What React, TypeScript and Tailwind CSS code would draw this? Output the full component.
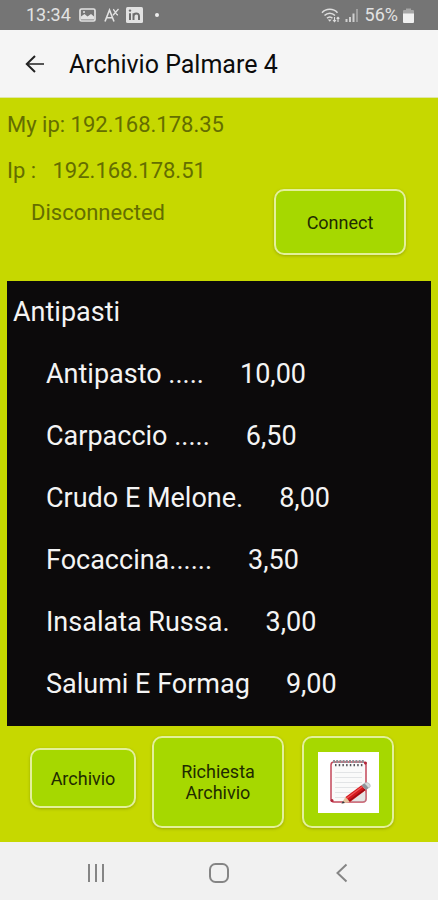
import type { ReactNode } from "react";

const dishes = [
  { name: "Antipasto .....", price: "10,00" },
  { name: "Carpaccio .....", price: "6,50" },
  { name: "Crudo E Melone.", price: "8,00" },
  { name: "Focaccina......", price: "3,50" },
  { name: "Insalata Russa.", price: "3,00" },
  { name: "Salumi E Formag", price: "9,00" },
];

function ActionButton({ className, label, children }: { className: string; label?: string; children: ReactNode }) {
  return (
    <button
      type="button"
      aria-label={label}
      className={`flex items-center justify-center rounded-[10px] border-2 border-[#e3f09a] bg-[#a6d800] text-[18px] leading-[21px] text-[#1f2b00] shadow-[0_1px_3px_rgba(80,90,0,0.35)] ${className}`}
    >
      {children}
    </button>
  );
}

function StatusBar() {
  return (
    <div className="flex h-[30px] items-center justify-between bg-[#757575] pr-6 pl-[26px] text-[18px] leading-5 text-[#e2e2e2]">
      <div className="flex items-center">
        <span>13:34</span>
        <svg className="ml-2" width="17" height="14" viewBox="0 0 17 14" aria-hidden="true">
          <rect x="1" y="1" width="15" height="12" rx="1.5" fill="none" stroke="#e2e2e2" strokeWidth="1.7" />
          <path d="M2 11.5 V8.5 L5.5 6 L8.5 8.5 L12 6 L15 8.5 V11.5 Z" fill="#e2e2e2" />
          <circle cx="5" cy="4" r="1" fill="#e2e2e2" />
        </svg>
        <svg className="ml-2" width="16" height="15" viewBox="0 0 16 15" fill="none" stroke="#e2e2e2" aria-hidden="true">
          <path d="M1 13.5 L5.5 2 L10 13.5 M2.6 9.8 H8.4" strokeWidth="1.6" />
          <path d="M9 1.5 C11 1.5 11.5 7 14 7 M14.5 1 L9 7.3" strokeWidth="1.3" />
        </svg>
        <svg className="ml-[6px]" width="17" height="16" viewBox="0 0 17 16" aria-hidden="true">
          <rect width="17" height="16" rx="1.5" fill="#e2e2e2" />
          <path d="M4 6.2 V13 M7.5 13 V6.2 M7.5 9.5 C7.5 5.6 13 5.4 13 9.2 V13" fill="none" stroke="#6c6c6c" strokeWidth="2" />
          <circle cx="4" cy="3.6" r="1.2" fill="#6c6c6c" />
        </svg>
        <span className="ml-3 size-1 rounded-full bg-[#eeeeee]" />
      </div>
      <div className="flex items-center">
        <svg width="19" height="15" viewBox="0 0 19 15" fill="none" stroke="#dedede" strokeWidth="1.5" aria-hidden="true">
          <path d="M1 4.8 C5 0.2 12.5 0.2 16.5 4.8 M3.5 7.6 C6.5 4.3 11 4.3 14 7.6 M6 10.3 C7.7 8.5 9.8 8.5 11.5 10.3" />
          <path d="M8.75 13.8 L6.8 11.5 H10.7 Z" fill="#dedede" stroke="none" />
          <path d="M13.5 9 V13.5 M12 12 L13.5 13.7 L15 12 M17 14 V9.3 M15.6 10.7 L17 9.2 L18.4 10.7" strokeWidth="1.1" />
        </svg>
        <svg className="ml-[5px]" width="14" height="14" viewBox="0 0 14 14" aria-hidden="true">
          <path d="M0.5 11 H2.5 V14 H0.5 Z M4 9 H6 V14 H4 Z M7.5 5.5 H9.5 V14 H7.5 Z" fill="#cfcfcf" />
          <path d="M11 1 H13 V14 H11 Z" fill="#a0a0a0" />
        </svg>
        <span className="ml-[6px]">56%</span>
        <svg className="ml-[5px]" width="11" height="15" viewBox="0 0 11 15" aria-hidden="true">
          <path d="M3 0.5 H8 V2 H10 Q11 2 11 3 V6 H0 V3 Q0 2 1 2 H3 Z" fill="#a6a6a6" />
          <path d="M0 5.5 H11 V14 Q11 15 10 15 H1 Q0 15 0 14 Z" fill="#f0f0f0" />
        </svg>
      </div>
    </div>
  );
}

function NotepadIcon() {
  return (
    <svg width="61" height="61" viewBox="0 0 61 61" aria-hidden="true">
      <rect width="61" height="61" fill="#ffffff" />
      <rect x="13" y="10" width="35" height="40" rx="3" fill="#fafafa" stroke="#c4475a" strokeWidth="1.5" />
      <path d="M17 20.5 H44 M17 25.5 H44 M17 30.5 H44 M17 35.5 H40 M17 40.5 H34 M17 45.5 H28" stroke="#e2e4e6" strokeWidth="1" />
      <path d="M15 9.5 H47" stroke="#8f8f96" strokeWidth="3" strokeDasharray="2 1.2" />
      <path d="M17 13.2 H46" stroke="#55555c" strokeWidth="2.2" strokeDasharray="1.5 2.2" />
      <circle cx="14" cy="48.5" r="1.5" fill="#b3263b" />
      <circle cx="47.5" cy="11" r="1.5" fill="#b3263b" />
      <path d="M26 51.5 L45 38 L48 41 V50 H28 Z" fill="#b9b9b9" opacity="0.35" />
      <path d="M23.5 51.5 L27.5 45 L32 50 Z" fill="#e6c3a0" />
      <path d="M23.5 51.5 L25 48.9 L27 51 Z" fill="#33363c" />
      <path d="M27.5 45 L43.5 33.2 L47.8 38 L32 50 Z" fill="#d3181d" />
      <path d="M28.8 46.2 L44.5 34.6" stroke="#f0585a" strokeWidth="1.2" />
      <path d="M31 49 L47 37.3" stroke="#9c0c14" strokeWidth="1.5" />
      <path d="M43.5 33.2 L46.2 31.2 L50.8 36 L47.8 38 Z" fill="#8d959b" />
      <path d="M46.2 31.2 Q49.5 29.5 51.7 32 Q53.3 34.5 50.8 36 Z" fill="#d7dbdc" stroke="#a7adb0" strokeWidth="0.6" />
    </svg>
  );
}

export default function App() {
  return (
    <div className="flex min-h-screen flex-col bg-[#c6d800] font-['Roboto',sans-serif]">
      <StatusBar />
      <header className="flex h-[68px] items-center border-b border-[#dfe6a8] bg-[#f5f5f5] pt-[2px] pl-[25px]">
        <button type="button" aria-label="Indietro">
          <svg width="20" height="20" viewBox="0 0 20 20" fill="none" aria-hidden="true">
            <path d="M19 9 H2" stroke="#555555" strokeWidth="2" />
            <path d="M10 1 L1.8 9 L10 17" stroke="#222222" strokeWidth="2" />
          </svg>
        </button>
        <h1 className="ml-6 text-[25px] leading-7 text-[#0c0c0c]">Archivio Palmare 4</h1>
      </header>

      <main className="flex flex-1 flex-col px-[7px] pt-3">
        <section className="text-[22px] leading-[30px] text-[#646e00]">
          <p>My ip: 192.168.178.35</p>
          <p className="mt-4 whitespace-pre">Ip :   192.168.178.51</p>
          <div className="flex items-start justify-between pr-[25px] pl-6">
            <p className="mt-3">Disconnected</p>
            <ActionButton className="mt-[3px] h-[66px] w-[132px]">Connect</ActionButton>
          </div>
        </section>

        <section className="mt-[26px] bg-[#0c0a0b] pb-[11px] text-[27px] leading-[62px] text-[#f4f4f4]">
          <h2 className="pl-[6px]">Antipasti</h2>
          <ul>
            {dishes.map((dish) => (
              <li key={dish.name} className="flex gap-9 pl-[39px]">
                <span>{dish.name}</span>
                <span>{dish.price}</span>
              </li>
            ))}
          </ul>
        </section>

        <section className="flex items-start pt-[10px] pb-[14px] pl-[23px]">
          <ActionButton className="mt-3 h-[60px] w-[106px]">Archivio</ActionButton>
          <ActionButton className="ml-4 h-[92px] w-[132px]">
            <span>
              Richiesta
              <br />
              Archivio
            </span>
          </ActionButton>
          <ActionButton className="ml-[18px] h-[92px] w-[92px]" label="Blocco note">
            <NotepadIcon />
          </ActionButton>
        </section>
      </main>

      <nav className="grid h-[58px] grid-cols-3 bg-[#f1f1f1] px-[35px] pt-1 text-[#858585]">
        <button type="button" aria-label="Recenti" className="flex items-center justify-center">
          <svg width="20" height="20" viewBox="0 0 20 20" fill="none" stroke="currentColor" strokeWidth="2" aria-hidden="true">
            <path d="M3 1 V19 M10 1 V19 M17 1 V19" />
          </svg>
        </button>
        <button type="button" aria-label="Home" className="flex items-center justify-center">
          <svg width="20" height="20" viewBox="0 0 20 20" fill="none" stroke="currentColor" strokeWidth="2" aria-hidden="true">
            <rect x="1" y="1" width="18" height="18" rx="5.5" />
          </svg>
        </button>
        <button type="button" aria-label="Indietro di sistema" className="flex items-center justify-center">
          <svg width="20" height="20" viewBox="0 0 20 20" fill="none" stroke="currentColor" strokeWidth="2" aria-hidden="true">
            <path d="M14.5 1.5 L5.5 10 L14.5 18.5" />
          </svg>
        </button>
      </nav>
    </div>
  );
}
